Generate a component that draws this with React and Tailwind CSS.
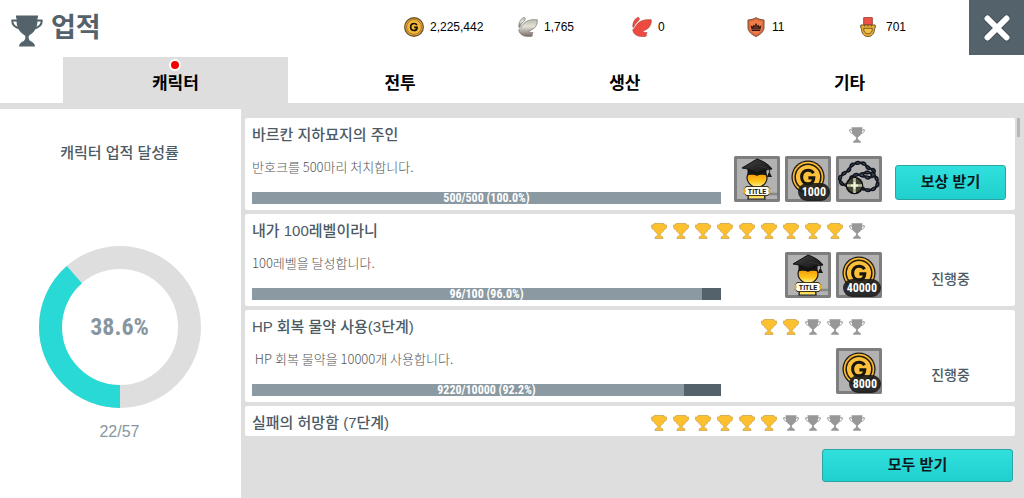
import React from "react";

const DIGITS = "font-['Liberation_Sans_Narrow','Roboto_Condensed','Roboto',sans-serif]";

function Trophy({ className }) {
  return (
    <svg viewBox="0 0 32 32" className={className} aria-hidden="true">
      <path
        d="M6 5.500H1.200C1.200 10 3.500 12.500 9 13.500M26 5.500h4.800c0 4.500-2.300 7-7.800 8"
        fill="none"
        stroke="currentColor"
        strokeWidth="2"
        strokeLinejoin="round"
      />
      <path
        fill="currentColor"
        d="M5 .5h22v2l-.6 1c.4 4-.4 8.500-2.400 11.500-1.500 2.300-4 4.200-6.200 5.700-.5 1.800 0 3.800 1.200 5 1.500 1.200 4.500 1.500 5 5.800H8c.5-4.300 3.500-4.600 5-5.800 1.200-1.200 1.700-3.200 1.200-5C12 19.200 9.500 17.300 8 15 6 12 5.200 7.500 5.600 3.500L5 2.500z"
      />
    </svg>
  );
}

function RatedTrophy({ earned }) {
  if (!earned) return <Trophy className="size-4 text-[#989898]" />;
  return (
    <svg viewBox="0 0 32 32" className="size-4" aria-hidden="true">
      <path
        d="M6 1h20l1 3h4l1 2c0 4-3 6-6.500 8-1.500 4-4 6-7 7.500v4c2 1 4.500 1.500 5.500 3v2.500H8V28.500c1-1.500 3.500-2 5.500-3v-4c-3-1.500-5.500-3.500-7-7.500C3 12 0 10 0 6l1-2h4z"
        fill="#fdc12f"
        stroke="#c9a14c"
        strokeWidth="1.500"
      />
    </svg>
  );
}

function Coin({ className }) {
  return (
    <svg viewBox="0 0 40 40" className={className} aria-hidden="true">
      <circle cx="20" cy="20" r="19.500" fill="#1f1a10" />
      <circle cx="20" cy="20" r="18" fill="#f7b733" />
      <circle cx="20" cy="20" r="16" fill="#1f1a10" />
      <circle cx="20" cy="20" r="14.200" fill="#fcc03a" />
      <path d="M26.500 15.500c-1.500-2.500-3.700-3.500-6.300-3.500-4.700 0-7.700 3.300-7.700 8s3 8 7.500 8c4.300 0 6.500-2.700 6.800-7H20.500" fill="none" stroke="#1a160e" strokeWidth="3.600" />
    </svg>
  );
}

function HeaderCoin() {
  return (
    <svg viewBox="0 0 20 20" className="size-5" aria-hidden="true">
      <circle cx="10" cy="10" r="9.300" fill="#f0b238" stroke="#75592a" strokeWidth="1.400" />
      <circle cx="10" cy="10" r="7.400" fill="#f6b63a" stroke="#8a6829" strokeWidth=".8" />
      <path d="M12.900 8.100C12.300 6.900 11.400 6.500 10.100 6.500 8 6.500 6.700 7.900 6.700 10s1.300 3.500 3.400 3.500c1.900 0 2.900-1.100 3-3.100h-3" fill="none" stroke="#15110b" strokeWidth="1.700" />
    </svg>
  );
}

function Wing({ silver }) {
  const fill = silver ? "url(#wing-silver)" : "#ee4b40";
  const stroke = silver ? "#77756f" : "#b5483f";
  return (
    <svg viewBox="0 0 20 20" className="size-5" aria-hidden="true">
      <defs>
        <linearGradient id="wing-silver" x1="0" y1="0" x2="0" y2="1">
          <stop offset="0" stopColor="#b9bbb2" />
          <stop offset=".4" stopColor="#e3e2d5" />
          <stop offset="1" stopColor="#77696a" />
        </linearGradient>
      </defs>
      <g fill={fill} stroke={stroke} strokeWidth=".7" strokeLinejoin="round">
        <path d="M1 10.500C.2 6.500 2.500 2 5.300.7 6.800.2 8 1.300 7 2.900 5.800 4.800 2.800 6.500 2.200 9.600z" />
        <path d="M.8 13.200c.2-1.200 1.200-1.500 2.200-2.700C4.800 7.500 6.500 4.800 10.500 3.500 13.500 2.500 16.800 2.500 19.300 2.800c.2 3-.7 6-2.800 8.100-1.500 1.500-3.700 2.400-5.800 3.200.5 1.200 2.200 1.600 4.300 1.500l-.9 2c.3.700.3 1 .2 1.400-1.800.8-5.200.7-7.800.1C3.800 18.400 1.300 16.300.8 13.200z" />
      </g>
    </svg>
  );
}

function Shield() {
  return (
    <svg viewBox="0 0 20 20" className="size-5" aria-hidden="true">
      <path d="M10 .7c2.500 1.500 5 2 8 2.300v7.500c0 4-3.500 7-8 9-4.500-2-8-5-8-9V3c3-.3 5.500-.8 8-2.300z" fill="#dc6a3c" stroke="#7c4a38" strokeWidth="1" />
      <path d="M10 2.800c2 1 4 1.500 6.200 1.800v5.700c0 3-2.700 5.300-6.200 7-3.500-1.700-6.200-4-6.200-7V4.600C6 4.300 8 3.800 10 2.800z" fill="#f07c49" />
      <path d="M6 14 4.600 8.600l2.300 1 .6-2 1.500 1.500.4-2.600h1.200l.4 2.600 1.500-1.500.6 2 2.300-1L14 14z" fill="#2b150e" />
      <path d="M6 12.300h8M8 9.800v1.500M12 9.800v1.500M10 9v2.300" stroke="#f07c49" strokeWidth=".6" />
    </svg>
  );
}

function Medal() {
  return (
    <svg viewBox="0 0 20 20" className="size-5" aria-hidden="true">
      <rect x="3.700" y=".2" width="8.600" height="8" rx=".6" fill="#ee5148" stroke="#8d3b34" strokeWidth=".9" />
      <path d="M.8 8h14.400v3.200l-.7.6c0 4.500-2.500 7.800-6.500 7.800s-6.500-3.300-6.500-7.800l-.7-.6z" fill="#e9ae38" stroke="#6d5120" strokeWidth="1" />
      <path d="M3.700 11.300h8.600c.3 3.200-1.500 5.600-4.300 5.600s-4.600-2.400-4.300-5.600z" fill="#f3be49" stroke="#6d5120" strokeWidth=".9" />
      <path d="M4.500 8v1.500M8 8v1.500M11.500 8v1.500" stroke="#6d5120" strokeWidth=".9" />
    </svg>
  );
}

function TitleIcon() {
  return (
    <svg viewBox="0 0 46 46" className="size-full" aria-hidden="true">
      <defs>
        <linearGradient id="gold-body" x1="0" y1="0" x2="0" y2="1">
          <stop offset="0" stopColor="#f39a08" />
          <stop offset=".6" stopColor="#ffc91e" />
          <stop offset="1" stopColor="#fff3a0" />
        </linearGradient>
        <linearGradient id="cap-top" x1="0" y1="0" x2="1" y2="1">
          <stop offset="0" stopColor="#444" />
          <stop offset="1" stopColor="#111" />
        </linearGradient>
      </defs>
      <path d="M30 38h15" stroke="#777" strokeWidth="2.500" opacity=".7" />
      <path d="M14 43c0-5 2-8 5-10h7c3 2 5 5 5 10z" fill="url(#gold-body)" stroke="#161616" strokeWidth="1.200" />
      <path d="M14 18h18c1.500 3 1.200 6-.3 8.500-1.500 2.600-5 4.500-8.500 4.500s-7-1.900-8.700-4.500c-1.600-2.500-2-5.500-.5-8.500z" fill="url(#gold-body)" stroke="#161616" strokeWidth="1.200" />
      <path d="M13.500 12v7.500c3-1.500 6.500-1.500 9.500.5 3-2 6.500-2 9.500-.5V12z" fill="#151515" />
      <path d="M23 3 8 12c5 .5 10 2 15.500 5 4.500-2.500 9-3.500 14.500-4-3.500-5-9-8-15-10z" fill="url(#cap-top)" stroke="#111" strokeWidth="1" />
      <path d="M24 10.500c5 0 9 1 11.500 3.500V20" fill="none" stroke="#333" strokeWidth="1.200" />
      <path d="m34.500 17-1.500 4h5l-2-4z" fill="#181818" />
      <path d="M12 30.500h22c0 1 1 2 2 2-1 1.500-1 3.500 0 5-1 0-2 1-2 2H12c0-1-1-2-2-2 1-1.500 1-3.500 0-5 1 0 2-1 2-2z" fill="#fffdf4" stroke="#463515" strokeWidth="1" />
      <path d="M10 32.500c1 1.500 1 3.500 0 5M36 32.500c-1 1.500-1 3.500 0 5" stroke="#e9a91b" strokeWidth="1.500" fill="none" />
      <text x="23" y="37.600" textAnchor="middle" fontSize="7" fontWeight="700" fontFamily="Roboto, sans-serif" fill="#111">TITLE</text>
    </svg>
  );
}

function RosaryIcon() {
  const chain =
    "M12 29C5 30 2 24 5 20s8-4 9-8 7-6 12-5 4 5 9 6 4 6 0 8-6-1-10-2-8 0-10 3M25 19c4-4 11-3 14 1s4 9 0 12-9 3-13 0";
  return (
    <svg viewBox="0 0 46 46" className="size-full" aria-hidden="true">
      <g fill="none" strokeLinecap="round">
        <path d={chain} stroke="#1b1f29" strokeWidth="2.600" />
        <path d={chain} stroke="#11141c" strokeWidth="4" strokeDasharray="1.500 4.500" />
        <path d={chain} stroke="#4a5870" strokeWidth="1" strokeDasharray="2 4" />
      </g>
      <circle cx="18.500" cy="29.500" r="8" fill="#424436" stroke="#111" strokeWidth="1.600" />
      <path d="M18.500 22v15M11 29.500h15" stroke="#bfc19a" strokeWidth="2.600" />
      <path d="M18.500 26v7M15 29.500h7" stroke="#f4f4dc" strokeWidth="1.800" />
    </svg>
  );
}

function Reward({ kind, amount }) {
  return (
    <div className="relative flex size-[46px] items-center justify-center rounded-xs bg-[#b2b2b2] inset-ring-3 inset-ring-[#7e7e7e]">
      {kind === "title" && <TitleIcon />}
      {kind === "rosary" && <RosaryIcon />}
      {kind === "gold" && <Coin className="mb-1 size-[34px]" />}
      {amount && (
        <span className={`absolute right-px bottom-px rounded-full bg-[#1c1c1c]/90 px-1 text-xs leading-[18px] font-bold text-white ${DIGITS}`}>
          {amount}
        </span>
      )}
    </div>
  );
}

const currencies = [
  { icon: <HeaderCoin />, value: "2,225,442" },
  { icon: <Wing silver />, value: "1,765" },
  { icon: <Wing />, value: "0" },
  { icon: <Shield />, value: "11" },
  { icon: <Medal />, value: "701" },
];

const tabs = ["캐릭터", "전투", "생산", "기타"];

const achievements = [
  {
    title: "바르칸 지하묘지의 주인",
    desc: "반호크를 500마리 처치합니다.",
    earned: 0,
    stages: 1,
    label: "500/500 (100.0%)",
    percent: 100,
    rewards: [{ kind: "title" }, { kind: "gold", amount: "1000" }, { kind: "rosary" }],
    claimable: true,
  },
  {
    title: "내가 100레벨이라니",
    desc: "100레벨을 달성합니다.",
    earned: 9,
    stages: 10,
    label: "96/100 (96.0%)",
    percent: 96,
    rewards: [{ kind: "title" }, { kind: "gold", amount: "40000" }],
  },
  {
    title: "HP 회복 물약 사용(3단계)",
    desc: "\u00a0HP 회복 물약을 10000개 사용합니다.",
    earned: 2,
    stages: 5,
    label: "9220/10000 (92.2%)",
    percent: 92.2,
    rewards: [{ kind: "gold", amount: "8000" }],
  },
  { title: "실패의 허망함 (7단계)", earned: 6, stages: 10 },
];

const buttonLook =
  "rounded-[3px] border border-[#2aa5a3] bg-linear-to-b from-[#2fe0dd] to-[#20d0ce] text-[15px] font-bold text-[#0c1a1c]";

function Achievement({ item }) {
  return (
    <li className="flex gap-[13px] rounded-xs bg-white pr-[9px] pl-[7px]">
      <div className="min-w-0 flex-1">
        <div className={`flex items-center justify-between pr-[17px] ${item.rewards ? "h-[34px]" : "h-[30px] pt-1"}`}>
          <h2 className="text-[15px] font-medium text-[#4c5a64]">{item.title}</h2>
          <div className="flex gap-1.5">
            {Array.from({ length: item.stages }, (_, i) => (
              <RatedTrophy key={i} earned={i < item.earned} />
            ))}
          </div>
        </div>
        {item.rewards && (
          <div className="flex h-[58px] gap-[13px]">
            <div className="min-w-0 flex-1">
              <p className="h-10 font-['Noto_Sans_CJK_KR',sans-serif] text-[13px] leading-[30px] font-light text-[#555]">{item.desc}</p>
              <div className="grid h-3 bg-[#53626b]">
                <div className="col-start-1 row-start-1 h-3 bg-[#8b99a2]" style={{ width: `${item.percent}%` }} />
                <span className={`col-start-1 row-start-1 text-center text-xs leading-3 font-bold text-white ${DIGITS}`}>
                  {item.label}
                </span>
              </div>
            </div>
            <div className="flex w-[148px] justify-end gap-[5px] pt-1">
              {item.rewards.map((r, i) => (
                <Reward key={i} {...r} />
              ))}
            </div>
          </div>
        )}
      </div>
      <div className={`grid w-[111px] ${item.rewards ? "pt-[47px] pb-[10px]" : ""}`}>
        {item.claimable && <button type="button" className={buttonLook}>보상 받기</button>}
        {item.rewards && !item.claimable && (
          <span className="self-center text-center text-sm font-medium text-[#4c5a64]">진행중</span>
        )}
      </div>
    </li>
  );
}

export default function App() {
  return (
    <div className="flex min-h-screen flex-col bg-white font-['Liberation_Sans','Noto_Sans_CJK_KR',sans-serif] text-black">
      <header className="flex h-[57px] items-start justify-between">
        <div className="flex h-[57px] items-center gap-2 pl-[11px]">
          <Trophy className="mt-1 size-8 text-[#53626b]" />
          <h1 className="text-[27px] leading-none font-bold text-[#53626b]">업적</h1>
        </div>
        <div className="flex">
          <ul className="grid h-[54px] grid-cols-[repeat(4,114px)_109px]">
            {currencies.map((c) => (
              <li key={c.value} className="flex items-center gap-1.5 text-xs">
                {c.icon}
                <span>{c.value}</span>
              </li>
            ))}
          </ul>
          <button type="button" aria-label="닫기" className="flex size-[55px] items-center justify-center bg-[#53626b]">
            <svg viewBox="0 0 28 28" className="size-7" aria-hidden="true">
              <path d="M4.500 4.500l19 19M23.500 4.500l-19 19" stroke="#414d55" strokeWidth="7.500" strokeLinecap="round" />
              <path d="M4.500 4.500l19 19M23.500 4.500l-19 19" stroke="#fff" strokeWidth="6" strokeLinecap="round" />
            </svg>
          </button>
        </div>
      </header>

      <nav className="grid h-[46px] grid-cols-4 pr-[62px] pl-[63px]">
        {tabs.map((tab, i) => (
          <button
            key={tab}
            type="button"
            className={`relative pt-2 text-[17px] font-bold ${i === 0 ? "bg-[#dedede]" : ""}`}
          >
            {tab}
            {i === 0 && (
              <span className="absolute inset-x-0 top-0.5 mx-auto size-3 rounded-full border-2 border-white bg-[#f40000]" />
            )}
          </button>
        ))}
      </nav>

      <div className="flex flex-1 bg-[#dedede] pt-1.5">
        <aside className="flex w-[241px] flex-col items-center bg-white pt-[34px] pr-0.5">
          <h2 className="text-[15px] leading-5 font-medium text-[#4c5a64]">캐릭터 업적 달성률</h2>
          <div className="mt-[83px] grid place-items-center">
            <svg viewBox="0 0 162 162" className="col-start-1 row-start-1 size-[162px] rotate-90" aria-hidden="true">
              <circle cx="81" cy="81" r="69.500" fill="none" stroke="#dedede" strokeWidth="23" />
              <circle cx="81" cy="81" r="69.500" fill="none" stroke="#28d9d5" strokeWidth="23" pathLength="100" strokeDasharray="38.6 61.4" />
            </svg>
            <span className={`col-start-1 row-start-1 text-2xl font-bold text-[#8796a0] ${DIGITS}`}>38.6%</span>
          </div>
          <p className="mt-3 text-base text-[#8796a0]">22/57</p>
        </aside>

        <main className="flex min-w-0 flex-1 flex-col pt-[9px] pl-1">
          <div className="flex gap-0.5 pr-1">
            <ul className="flex min-w-0 flex-1 flex-col gap-1">
              {achievements.map((item) => (
                <Achievement key={item.title} item={item} />
              ))}
            </ul>
            <div className="h-[19px] w-[3px] bg-[#b3b8bb]" />
          </div>
          <div className="flex justify-end pt-[13px] pr-[11px] pb-4">
            <button type="button" className={`h-[33px] w-[191px] ${buttonLook}`}>모두 받기</button>
          </div>
        </main>
      </div>
    </div>
  );
}
